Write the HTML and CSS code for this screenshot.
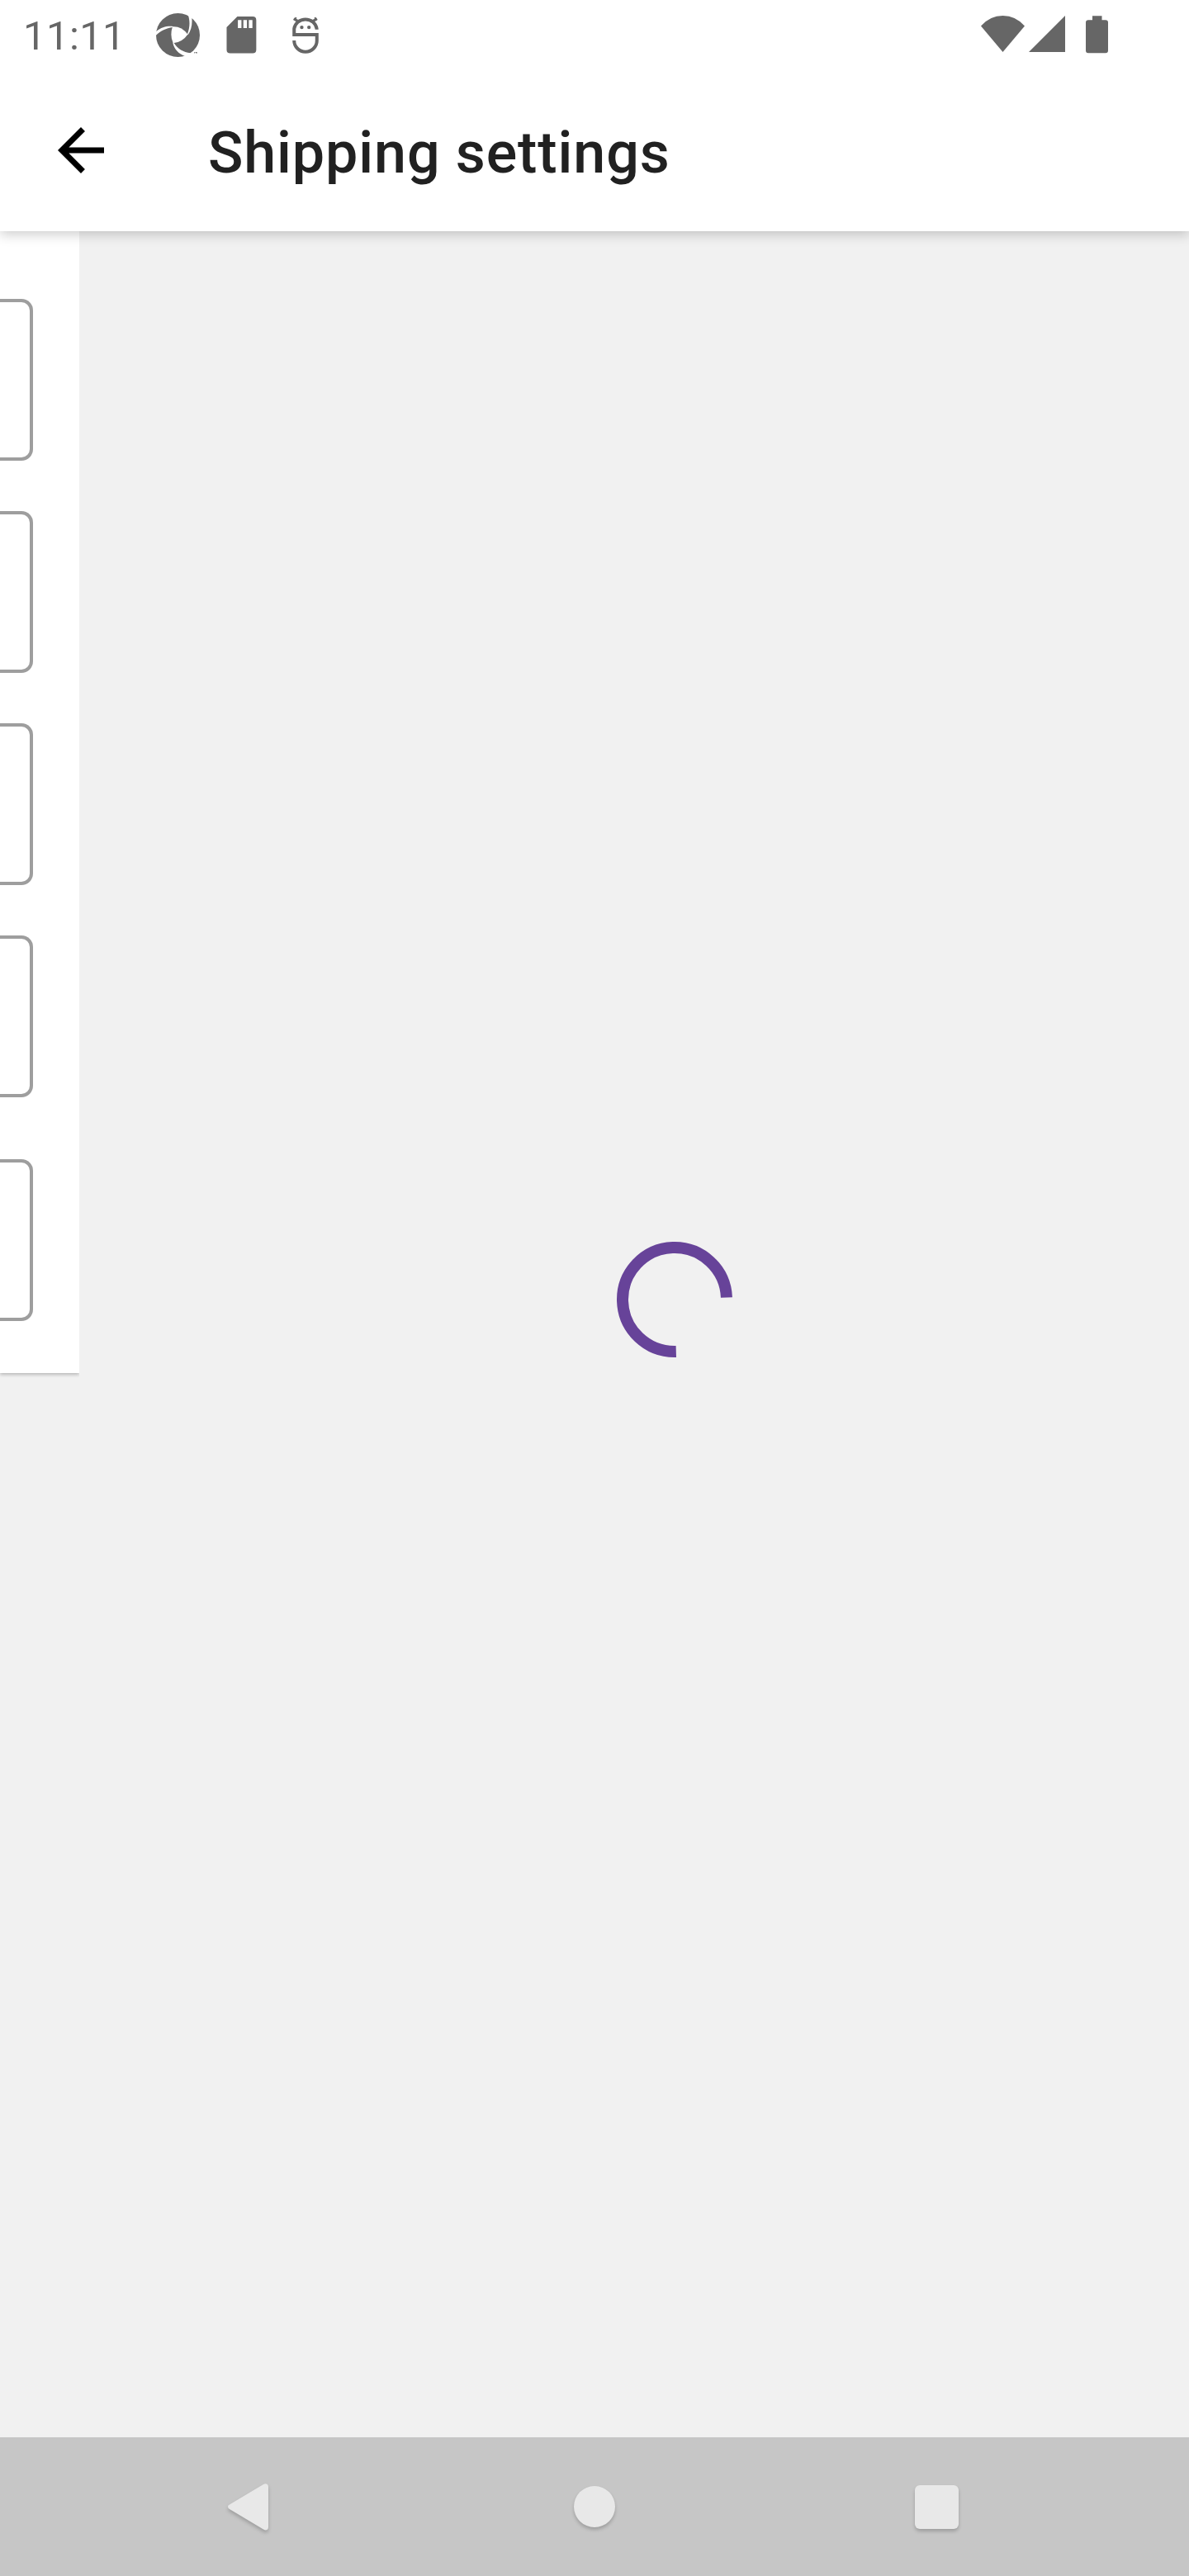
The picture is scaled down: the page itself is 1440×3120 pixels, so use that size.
FILE: index.html
```html
<!DOCTYPE html>
<html lang="en">
<head>
<meta charset="utf-8">
<title>Shipping settings</title>
<link rel="stylesheet" href="styles.css">
</head>
<body>
<div class="screen">
  <div class="status-bar">
    <div class="status-left">
      <span class="clock">11:11</span>
      <svg class="icon-aperture" viewBox="567 48 159 159">
        <circle cx="646.5" cy="127.500" r="79.500" fill="#666"/>
        <g fill="#fff">
          <path d="M627 97Q660 95 682 125Q663 153 629 157Q616 127 627 97Z"/>
          <path d="M564 117C585 99 605 94 628 96L627 99C602 103 582 113 564 131Z"/>
          <path d="M681 124C690 100 691 75 683 53L697 46V66C699 90 695 108 683 127Z"/>
          <path d="M628 157L632 156C645 177 666 190 692 193L707 187V205L672 204C648 195 634 180 628 157Z"/>
        </g>
        <path d="M705 189h5v1.500h-2v4h-1.500v-4H705zM711 189h5v5h-1.500v-3l-1 1-1-1v3H711z" fill="#666"/>
      </svg>
      <svg class="icon-sd" viewBox="822 60 109 134">
        <path fill="#666" fill-rule="evenodd" d="M862 60H918Q931 60 931 73V181Q931 194 918 194H836Q823 194 823 181V99ZM864 73V102H877V73ZM884 73V102H897V73ZM904 73V102H917V73Z"/>
      </svg>
      <svg class="icon-robot" viewBox="1061 58 95 137">
        <g fill="none" stroke="#666" stroke-width="12">
          <path d="M1149 108V105A41 38 0 0 0 1067.500 105V126.500H1149.500V148A41 40 0 0 1 1067.500 148V147"/>
          <path d="M1066 69L1080 77M1150 69L1136 77" stroke-width="9"/>
          <path d="M1074 64L1071 76M1143 64L1146 76" stroke-width="6"/>
        </g>
        <circle cx="1095" cy="100" r="6.500" fill="#666"/><circle cx="1121" cy="100" r="6.500" fill="#666"/>
      </svg>
    </div>
    <div class="status-right">
      <svg class="icon-wifi" viewBox="0 0 53 44"><path fill="#666" d="M26.500 44L0 12.500Q11 0 26.500 0T53 12.500Z"/></svg>
      <svg class="icon-signal" viewBox="0 0 44 44"><path fill="#666" d="M44 0V44H0Z"/></svg>
      <svg class="icon-battery" viewBox="0 0 27 45"><path fill="#666" d="M8 0H19.500V5H24Q27 5 27 8V42Q27 45 24 45H3Q0 45 0 42V8Q0 5 3 5H8Z"/></svg>
    </div>
  </div>
  <header class="app-bar">
    <svg class="icon-back" viewBox="4 4 16 16"><path d="M20 11H7.830l5.590-5.590L12 4l-8 8 8 8 1.410-1.410L7.830 13H20v-2z"/></svg>
    <h1 class="title">Shipping settings</h1>
  </header>
  <main class="content">
    <section class="card">
      <div class="field"></div>
      <div class="field"></div>
      <div class="field"></div>
      <div class="field"></div>
      <div class="field field-last"></div>
    </section>
    <div class="loading">
      <svg class="spinner" viewBox="-71 -71 142 142"><path d="M62.950 -2.500A63 63 0 1 0 1.800 62.970" fill="none" stroke="#674399" stroke-width="14"/></svg>
    </div>
  </main>
  <nav class="nav-bar">
    <svg class="nav-back" viewBox="0 0 50 57"><path fill="#e8e8e8" d="M43 1Q45.500 -.5 47.500 .7Q49 1.700 49 4V53Q49 55 47.500 56Q45.500 57 43 55.500L2 31Q0 30 0 28T2 25.500Z"/></svg>
    <div class="nav-home"></div>
    <div class="nav-recent"></div>
  </nav>
</div>
</body>
</html>
```
FILE: styles.css
```css
* { box-sizing: border-box; }
body { margin: 0; font-family: Roboto, "Liberation Sans", sans-serif; }
svg { display: block; flex: none; }
.screen { width: 1440px; height: 3120px; display: flex; flex-direction: column; background: #f1f1f1; overflow: hidden; }

.status-bar { height: 84px; flex: none; display: flex; justify-content: space-between; background: #fff; }
.status-left { display: flex; align-items: flex-start; padding-left: 28px; }
.clock { width: 161px; margin-top: 15px; font-size: 49px; line-height: 57px; letter-spacing: 0.4px; color: #666; }
.icon-aperture { width: 53px; height: 53px; margin-top: 16px; }
.icon-sd { width: 36.500px; height: 44.500px; margin: 20px 0 0 32px; }
.icon-robot { width: 32px; height: 46px; margin: 19px 0 0 43.500px; }
.status-right { display: flex; align-items: flex-start; padding: 19px 98px 0 0; }
.icon-wifi { width: 53px; height: 44px; }
.icon-signal { width: 44px; height: 44px; margin-left: 5px; }
.icon-battery { width: 27px; height: 45.500px; margin-left: 25px; }

.app-bar { height: 196px; flex: none; display: flex; align-items: center; padding-left: 70px; background: #fff; position: relative; z-index: 1; box-shadow: 0 4px 14px rgba(0,0,0,.2); clip-path: inset(0 0 -24px 0); }
.icon-back { width: 56px; height: 56px; }
.title { margin: 6px 0 0 126px; font-size: 70px; line-height: 82px; font-weight: 500; letter-spacing: 0.9px; color: #212121; white-space: nowrap; }

.content { flex: 1; display: flex; align-items: flex-start; }
.card { width: 96px; height: 1383px; flex: none; padding: 82px 56px 0 0; display: flex; flex-direction: column; gap: 61px; background: #fff; box-shadow: 0 2px 4px rgba(0,0,0,.24); clip-path: inset(0 0 -8px 0); }
.field { height: 196px; flex: none; border: 4px solid #9e9e9e; border-left: 0; border-radius: 0 14px 14px 0; }
.field-last { margin-top: 14px; }
.loading { flex: 1; display: flex; justify-content: center; padding-top: 1223px; }
.spinner { width: 142px; height: 142px; margin-right: -97px; }

.nav-bar { height: 168px; flex: none; display: flex; align-items: center; padding-left: 276px; background: #c6c6c6; }
.nav-back { width: 50px; height: 57px; overflow: visible; filter: drop-shadow(0 3px 2px rgba(0,0,0,.2)); }
.nav-home { width: 50px; height: 50px; margin-left: 369px; border-radius: 50%; background: #e8e8e8; box-shadow: 0 3px 4px rgba(0,0,0,.2); }
.nav-recent { width: 53px; height: 53px; margin-left: 363px; border-radius: 6px; background: #e8e8e8; box-shadow: 0 3px 4px rgba(0,0,0,.2); }
```
